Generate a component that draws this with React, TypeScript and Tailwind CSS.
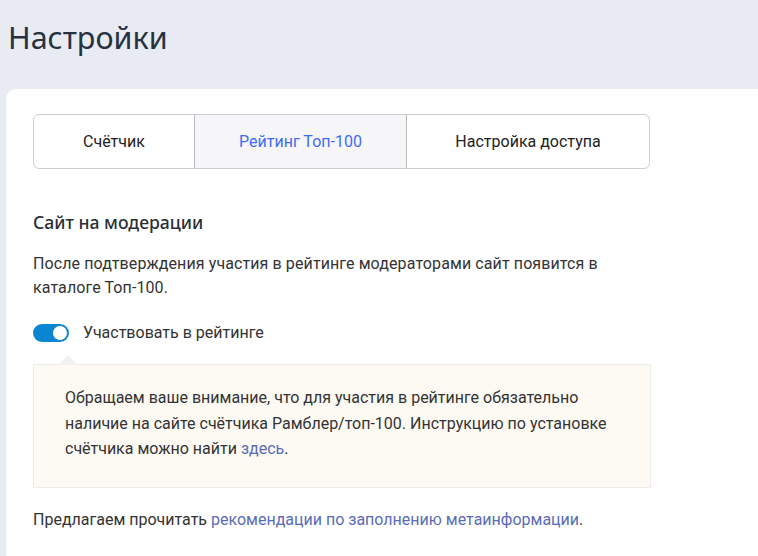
import React from "react";

export default function App() {
  return (
    <div className="w-[758px] h-[556px] overflow-hidden bg-[#e9ebf3] flex flex-col" style={{ fontFamily: "Roboto, 'Liberation Sans', sans-serif" }}>
      <div className="h-[89px] pl-[8px] pt-[17px] shrink-0">
        <h1 className="text-[30.5px] leading-[40px] text-[#27323f] font-normal" style={{ fontFamily: "'Noto Sans', 'Open Sans', sans-serif" }}>
          Настройки
        </h1>
      </div>
      <div className="ml-[6px] flex-1 bg-white rounded-tl-[10px] pl-[27px] pt-[25px]">
        <div className="flex w-[617px] h-[55px] border border-[#cdcdd2] rounded-[6px] overflow-hidden text-[16px] text-[#222]">
          <div className="w-[160px] flex items-center justify-center">Счётчик</div>
          <div className="w-[213px] flex items-center justify-center bg-[#f6f6f9] border-l border-r border-[#b8b8bd] text-[#3f6cf5]">
            Рейтинг Топ-100
          </div>
          <div className="flex-1 flex items-center justify-center">Настройка доступа</div>
        </div>

        <h2 className="mt-[40px] text-[17.6px] leading-[26px] font-medium text-[#2a2f36]" style={{ fontFamily: "'Noto Sans', 'Open Sans', sans-serif" }}>
          Сайт на модерации
        </h2>
        <p className="mt-[17px] w-[600px] text-[16px] leading-[24px] tracking-[0.1px] text-[#333]">
          После подтверждения участия в рейтинге модераторами сайт появится в каталоге Топ-100.
        </p>

        <div className="mt-[23px] flex items-center gap-[14px]">
          <div className="relative w-[36px] h-[18px] rounded-full bg-[#0a85d1]">
            <div className="absolute right-[1px] top-[1px] w-[16px] h-[16px] rounded-full bg-white border border-[#0a85d1]" />
          </div>
          <span className="text-[16px] text-[#333] leading-[20px]">Участвовать в рейтинге</span>
        </div>

        <div className="relative mt-[21px] w-[618px] bg-[#fdfaf3] border border-[#ececec] pl-[31px] pr-[20px] pt-[20px] pb-[25px] text-[16px] leading-[25.5px] text-[#333]">
          <div className="absolute -top-[10px] left-[25px] w-0 h-0 border-l-[9px] border-r-[9px] border-b-[10px] border-l-transparent border-r-transparent border-b-[#ececec]" />
          <div className="absolute -top-[9px] left-[26px] w-0 h-0 border-l-[8px] border-r-[8px] border-b-[9px] border-l-transparent border-r-transparent border-b-[#f1f1f1]" />
          Обращаем ваше внимание, что для участия в рейтинге обязательно наличие на сайте счётчика Рамблер/топ-100. Инструкцию по установке счётчика можно найти{" "}
          <a className="text-[#5a6cb6]">здесь</a>.
        </div>

        <p className="mt-[20px] text-[16px] leading-[24px] text-[#333]">
          Предлагаем прочитать <a className="text-[#5a6cb6]">рекомендации по заполнению метаинформации</a>.
        </p>
      </div>
    </div>
  );
}
